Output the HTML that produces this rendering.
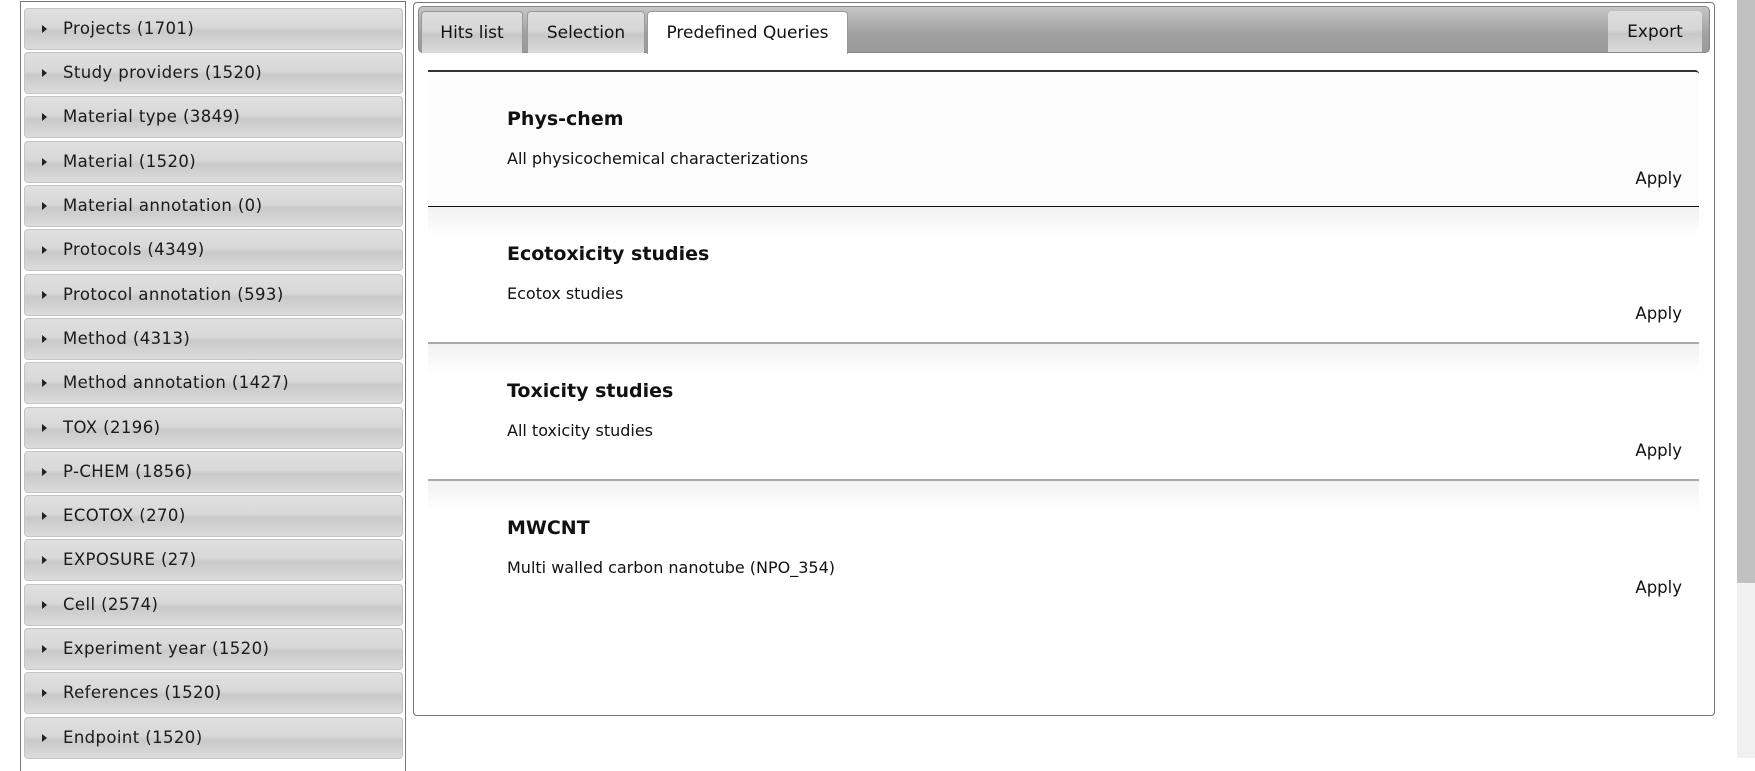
<!DOCTYPE html>
<html><head><style>
*{margin:0;padding:0;box-sizing:border-box}
body{width:1755px;height:758px;background:#fff;position:relative;overflow:hidden;font-family:"DejaVu Sans",Verdana,sans-serif;color:#111}
.lp{position:absolute;left:20px;top:1px;width:386px;height:770px;border:1px solid #777;border-bottom:none}
.row{position:absolute;left:3px;width:379px;height:42px;border:1px solid #c4c4c4;border-radius:4px;background:linear-gradient(#e0e0e0,#d8d8d8 45%,#c9c9c9 55%,#dcdcdc);font-size:16.5px;letter-spacing:0.4px;line-height:40px;padding-left:38px;color:#1a1a1a}
.row:before{content:"";position:absolute;left:17px;top:16px;border-left:5px solid #222;border-top:4px solid transparent;border-bottom:4px solid transparent}
.rp{position:absolute;left:413px;top:2px;width:1302px;height:714px;border:1px solid #777;border-radius:4px}
.bar{position:absolute;left:418px;top:6px;width:1292px;height:47px;border-radius:5px;background:linear-gradient(#c6c6c6,#a0a0a0 60%,#9a9a9a);border:1px solid #888}
.tab{position:absolute;top:11px;height:42px;border:1px solid #999;border-bottom:none;border-radius:4px 4px 0 0;background:linear-gradient(#dedede,#d6d6d6 45%,#c8c8c8 55%,#dadada);font-size:17px;line-height:42px;text-align:center;color:#111}
.item{position:absolute;left:428px;width:1271px;height:137px}
.t{position:absolute;left:79px;top:36px;font-weight:bold;font-size:19px}
.d{position:absolute;left:79px;top:77px;font-size:16px}
.a{position:absolute;right:17px;top:97px;font-size:16.5px}
.g{background:linear-gradient(to bottom,#f2f2f2,#fff 30px)}
</style></head><body>
<div class="lp">
<div class="row" style="top:6px">Projects (1701)</div>
<div class="row" style="top:50px">Study providers (1520)</div>
<div class="row" style="top:94px">Material type (3849)</div>
<div class="row" style="top:139px">Material (1520)</div>
<div class="row" style="top:183px">Material annotation (0)</div>
<div class="row" style="top:227px">Protocols (4349)</div>
<div class="row" style="top:272px">Protocol annotation (593)</div>
<div class="row" style="top:316px">Method (4313)</div>
<div class="row" style="top:360px">Method annotation (1427)</div>
<div class="row" style="top:405px">TOX (2196)</div>
<div class="row" style="top:449px">P-CHEM (1856)</div>
<div class="row" style="top:493px">ECOTOX (270)</div>
<div class="row" style="top:537px">EXPOSURE (27)</div>
<div class="row" style="top:582px">Cell (2574)</div>
<div class="row" style="top:626px">Experiment year (1520)</div>
<div class="row" style="top:670px">References (1520)</div>
<div class="row" style="top:715px">Endpoint (1520)</div>
</div>
<div class="rp"></div>
<div class="bar"></div>
<div class="tab" style="left:421px;width:102px">Hits list</div>
<div class="tab" style="left:527px;width:118px">Selection</div>
<div class="tab" style="left:647px;width:201px;background:#fff;height:43px">Predefined Queries</div>
<div class="tab" style="left:1608px;width:94px;height:41px;border:none">Export</div>
<div class="item" style="top:70px;background:#fcfcfc;border-top:2px solid #333;border-bottom:1px solid #111;border-radius:0 4px 0 0"><div class="t">Phys-chem</div><div class="d">All physicochemical characterizations</div><div class="a">Apply</div></div>
<div class="item g" style="top:207px;border-bottom:2px solid #aaa"><div class="t">Ecotoxicity studies</div><div class="d">Ecotox studies</div><div class="a">Apply</div></div>
<div class="item g" style="top:344px;border-bottom:2px solid #aaa"><div class="t">Toxicity studies</div><div class="d">All toxicity studies</div><div class="a">Apply</div></div>
<div class="item g" style="top:481px"><div class="t">MWCNT</div><div class="d">Multi walled carbon nanotube (NPO_354)</div><div class="a">Apply</div></div>
<div style="position:absolute;left:1737px;top:0;width:18px;height:583px;background:#c0c0c0"></div>
<div style="position:absolute;left:1737px;top:583px;width:18px;height:175px;background:#f0f0f0"></div>
</body></html>
